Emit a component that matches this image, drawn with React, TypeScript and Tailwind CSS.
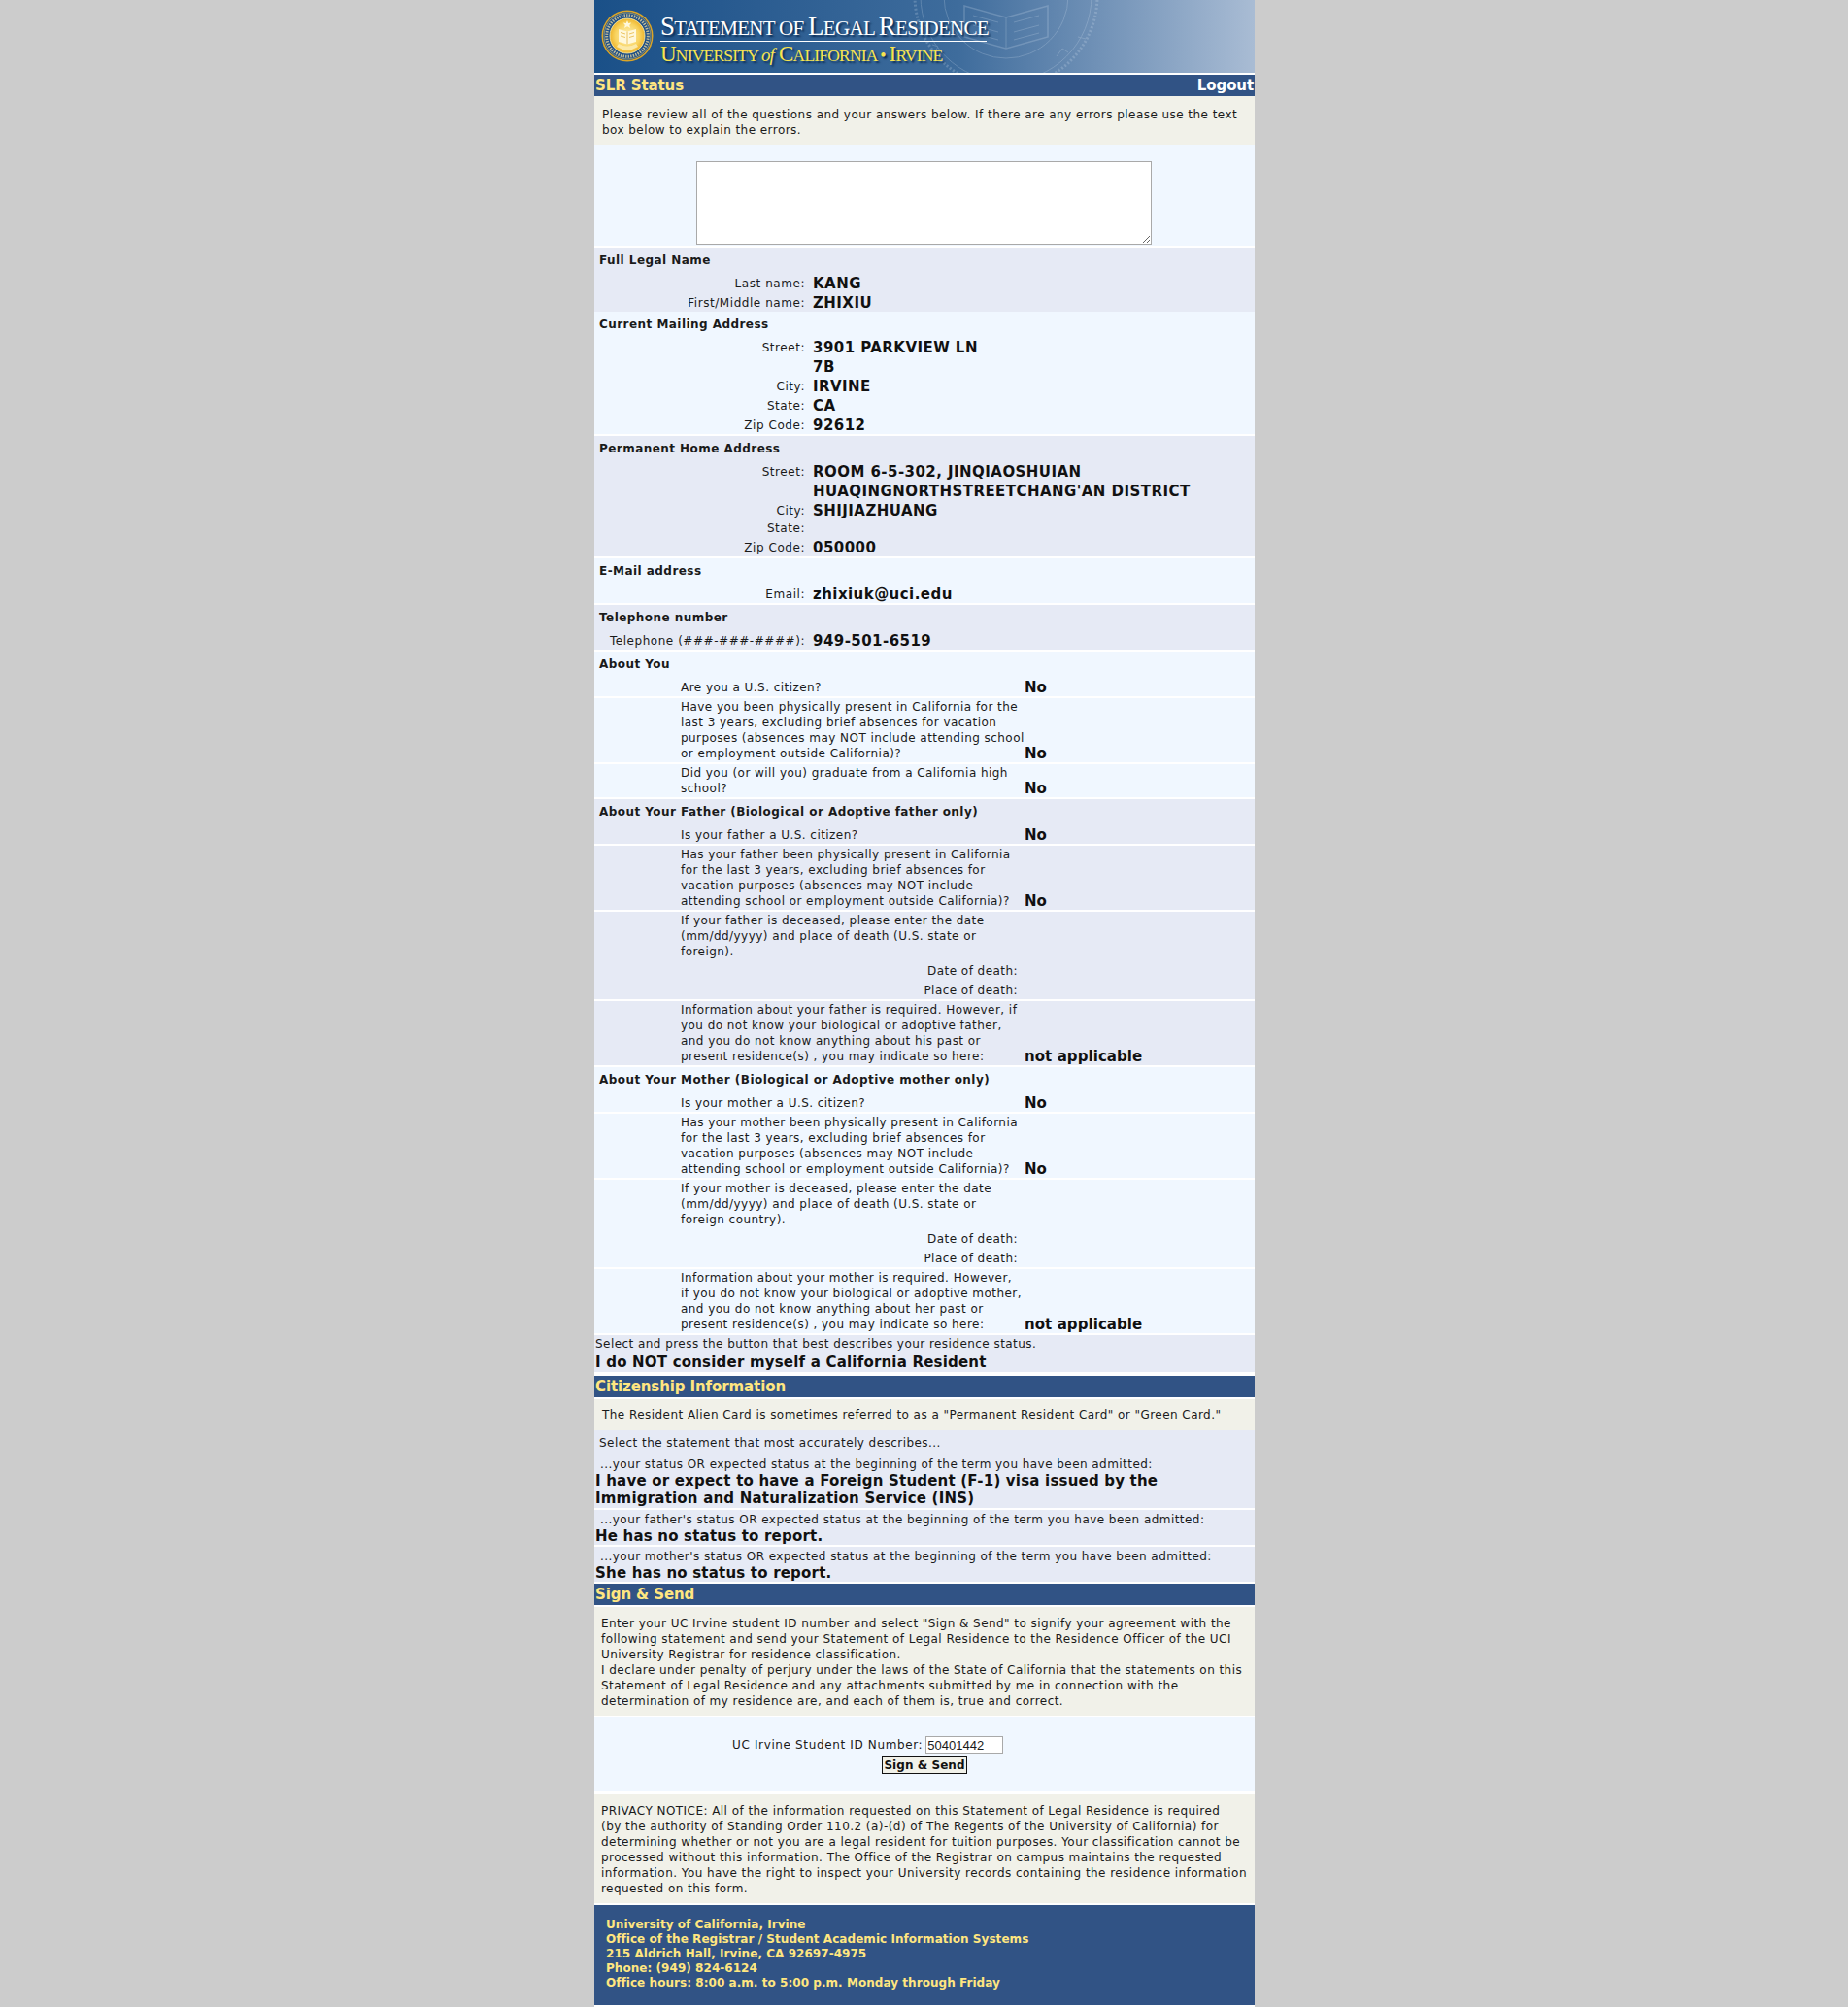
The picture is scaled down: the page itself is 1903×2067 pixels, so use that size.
import React from 'react'

const band = 'bg-[#e6eaf5]'
const light = 'bg-[#f0f7ff]'
const tan = 'bg-[#f1f1e9]'
const value = 'font-bold text-[15px] leading-[18px] tracking-[0.45px] text-[#111]'

function Cap({ big, small }: { big: string; small: string }) {
  return (
    <>
      <span className="text-[27px]">{big}</span>
      <span className="text-[21px]">{small}</span>
    </>
  )
}

function Seal() {
  return (
    <svg viewBox="0 0 54 54" className="mt-[10px] w-[54px] h-[54px] shrink-0">
      <defs>
        <radialGradient id="sealDisc">
          <stop offset="0%" stopColor="#fff3c0" />
          <stop offset="70%" stopColor="#f8d35f" />
          <stop offset="100%" stopColor="#eeb52e" />
        </radialGradient>
      </defs>
      <circle cx="27" cy="27" r="26.5" fill="#dca526" />
      <circle cx="27" cy="27" r="25" fill="#1f4f86" />
      <circle cx="27" cy="27" r="24" fill="none" stroke="#f7d774" strokeWidth="0.5" />
      <circle cx="27" cy="27" r="18" fill="url(#sealDisc)" stroke="#fff2b0" strokeWidth="0.8" />
      <circle cx="27" cy="27" r="21.3" fill="none" stroke="#f4dfa0" strokeWidth="3" strokeDasharray="1.4 1.2" opacity="0.75" />
      <path d="M18 20 L27 22.5 L36 20 L36 33 L27 35.5 L18 33 Z" fill="#fff8dc" />
      <path d="M27 22.5 V35.5 M20 23.5 L25 25 M20 27 L25 28.5 M29 25 L34 23.5 M29 28.5 L34 27" stroke="#e3ad2c" strokeWidth="0.7" fill="none" />
      <path d="M27 11 l1.2 3 3-.4-2 2.3 1 3-3.2-1.6-3.2 1.6 1-3-2-2.3 3 .4 z" fill="#fff8dc" />
      <path d="M16 38 Q27 45 38 38 L36 35 Q27 40 18 35 Z" fill="#fbe9a8" />
    </svg>
  )
}

function Watermark() {
  return (
    <svg viewBox="0 102 196 75" className="absolute left-[326px] top-0 w-[196px] h-[75px] opacity-[0.22]" fill="none" stroke="#dbe7f5">
      <circle cx="98" cy="98" r="94" strokeWidth="3" strokeDasharray="2 2" />
      <circle cx="98" cy="98" r="88" strokeWidth="1" />
      <circle cx="98" cy="98" r="64" strokeWidth="1" />
      <path d="M55 108 L98 120 L141 108 L141 140 L98 152 L55 140 Z" strokeWidth="1.5" />
      <path d="M98 120 V152 M64 118 L90 125 M64 128 L90 135 M64 136 L90 143 M106 125 L132 118 M106 135 L132 128 M106 143 L132 136" strokeWidth="1" />
      <path d="M14 128 L20 132 L14 138 M22 148 L28 150 L24 157 M150 160 L156 152 L162 156 M172 140 L180 142" strokeWidth="1" />
    </svg>
  )
}

function Header() {
  return (
    <div className="relative h-[75px] overflow-hidden flex items-start pl-[7px] tracking-normal bg-gradient-to-r from-[#1a5088] via-[#3e6c9c] via-55% to-[#a9bcd4]">
      <Watermark />
      <Seal />
      <div className="relative ml-[7px] font-['Liberation_Serif',serif]">
        <div className="h-[42px] pt-[14px] leading-[27px] tracking-[-0.7px] text-white whitespace-nowrap [text-shadow:2px_2px_2px_#0b2b52]">
          <Cap big="S" small="TATEMENT OF " /><Cap big="L" small="EGAL " /><Cap big="R" small="ESIDENCE" />
        </div>
        <div className="h-[1px] w-[336px] bg-white" />
        <div className="mt-[1px] leading-[23px] tracking-[-0.8px] text-[#f8e44f] whitespace-nowrap [text-shadow:2px_2px_2px_#0b2b52]">
          <span className="text-[23px]">U</span><span className="text-[17.5px]">NIVERSITY </span><span className="text-[19px] italic">of</span>
          <span className="text-[23px]"> C</span><span className="text-[17.5px]">ALIFORNIA </span><span className="text-[18px]">• </span>
          <span className="text-[23px]">I</span><span className="text-[17.5px]">RVINE</span>
        </div>
      </div>
    </div>
  )
}

function NavBar({ title, right, className = '' }: { title: string; right?: string; className?: string }) {
  return (
    <div className={`h-[22px] bg-[#315385] flex items-center justify-between px-[1px] font-bold text-[15px] tracking-[-0.1px] ${className}`}>
      <span className="text-[#ffe680]">{title}</span>
      {right && <a className="text-white">{right}</a>}
    </div>
  )
}

type Field = { label: string; val?: string }

function Section({ title, fields, bg, className = '' }: { title: string; fields: Field[]; bg: string; className?: string }) {
  return (
    <div className={`${bg} ${className}`}>
      <div className="h-[26px] pl-[5px] pt-[5px] font-bold leading-[16px]">{title}</div>
      {fields.map((f, i) => (
        <div key={i} className={`flex items-center ${f.val ? 'h-[20px] pt-[2px]' : 'h-[18px]'}`}>
          <div className="w-[217px] text-right tracking-[0.55px]">{f.label}</div>
          <div className={`ml-[8px] ${value}`}>{f.val}</div>
        </div>
      ))}
    </div>
  )
}

function Question({ text, answer, extra, bg, first }: { text: string; answer?: string; extra?: boolean; bg: string; first?: boolean }) {
  return (
    <div className={`${bg} ${first ? '' : 'mt-[2px]'}`}>
      <div className="flex items-end py-[1px]">
        <div className="ml-[89px] w-[354px] whitespace-pre-line">{text}</div>
        <div className="font-bold text-[15px] tracking-[0.07px] text-[#111] h-[20px] leading-[24px]">{answer}</div>
      </div>
      {extra && (
        <>
          <div className="ml-[89px] w-[347px] h-[20px] text-right leading-[20px] pt-[1px]">Date of death:</div>
          <div className="ml-[89px] w-[347px] h-[20px] text-right leading-[20px] pt-[1px]">Place of death:</div>
        </>
      )}
    </div>
  )
}

function QBlock({ title, bg, rows, className = '' }: { title: string; bg: string; rows: { text: string; answer?: string; extra?: boolean }[]; className?: string }) {
  return (
    <div className={className}>
      <div className={`${bg} h-[24px] pl-[5px] pt-[5px] font-bold leading-[16px]`}>{title}</div>
      {rows.map((r, i) => (
        <Question key={i} {...r} bg={bg} first={i === 0} />
      ))}
    </div>
  )
}

function Status({ q, a, className = '' }: { q: string; a: string; className?: string }) {
  return (
    <div className={className}>
      <div className="pl-[6px] leading-[16px]">{q}</div>
      <div className="pl-[1px] font-bold text-[15px] leading-[18px] tracking-[0.2px] text-[#111]">{a}</div>
    </div>
  )
}

export default function App() {
  return (
    <div className="min-h-screen bg-[#cccccc] font-['DejaVu_Sans','Liberation_Sans',sans-serif] text-[12px] leading-[16px] tracking-[0.45px] text-[#1a1a1a]">
      <div className="w-[680px] ml-[612px] bg-white pb-[2px]">
        <Header />
        <NavBar title="SLR Status" right="Logout" className="mt-[2px]" />
        <div className={`${tan} h-[50px] px-[8px] pt-[11px]`}>
          Please review all of the questions and your answers below. If there are any errors please use the text box below to explain the errors.
        </div>
        <div className={`${light} h-[104px] flex justify-center pt-[17px]`}>
          <textarea className="w-[469px] h-[86px] bg-white border border-[#a9a9a9] ml-[-1px]" />
        </div>
        <Section
          className="mt-[2px]"
          bg={band}
          title="Full Legal Name"
          fields={[
            { label: 'Last name:', val: 'KANG' },
            { label: 'First/Middle name:', val: 'ZHIXIU' },
          ]}
        />
        <Section
          bg={light}
          title="Current Mailing Address"
          fields={[
            { label: 'Street:', val: '3901 PARKVIEW LN' },
            { label: '', val: '7B' },
            { label: 'City:', val: 'IRVINE' },
            { label: 'State:', val: 'CA' },
            { label: 'Zip Code:', val: '92612' },
          ]}
        />
        <Section
          className="mt-[2px]"
          bg={band}
          title="Permanent Home Address"
          fields={[
            { label: 'Street:', val: 'ROOM 6-5-302, JINQIAOSHUIAN' },
            { label: '', val: "HUAQINGNORTHSTREETCHANG'AN DISTRICT" },
            { label: 'City:', val: 'SHIJIAZHUANG' },
            { label: 'State:' },
            { label: 'Zip Code:', val: '050000' },
          ]}
        />
        <Section className="mt-[2px]" bg={light} title="E-Mail address" fields={[{ label: 'Email:', val: 'zhixiuk@uci.edu' }]} />
        <Section className="mt-[2px]" bg={band} title="Telephone number" fields={[{ label: 'Telephone (###-###-####):', val: '949-501-6519' }]} />

        <QBlock
          className="mt-[2px]"
          bg={light}
          title="About You"
          rows={[
            { text: 'Are you a U.S. citizen?', answer: 'No' },
            { text: 'Have you been physically present in California for the last 3 years, excluding brief absences for vacation purposes (absences may NOT include attending school or employment outside California)?', answer: 'No' },
            { text: 'Did you (or will you) graduate from a California high school?', answer: 'No' },
          ]}
        />
        <QBlock
          className="mt-[2px]"
          bg={band}
          title="About Your Father (Biological or Adoptive father only)"
          rows={[
            { text: 'Is your father a U.S. citizen?', answer: 'No' },
            { text: 'Has your father been physically present in California for the last 3 years, excluding brief absences for vacation purposes (absences may NOT include attending school or employment outside California)?', answer: 'No' },
            { text: 'If your father is deceased, please enter the date (mm/dd/yyyy) and place of death (U.S. state or foreign).', extra: true },
            { text: 'Information about your father is required. However, if you do not know your biological or adoptive father, and you do not know anything about his past or present residence(s) , you may indicate so here:', answer: 'not applicable' },
          ]}
        />
        <QBlock
          className="mt-[2px]"
          bg={light}
          title="About Your Mother (Biological or Adoptive mother only)"
          rows={[
            { text: 'Is your mother a U.S. citizen?', answer: 'No' },
            { text: 'Has your mother been physically present in California for the last 3 years, excluding brief absences for vacation purposes (absences may NOT include attending school or employment outside California)?', answer: 'No' },
            { text: 'If your mother is deceased, please enter the date (mm/dd/yyyy) and place of death (U.S. state or\nforeign country).', extra: true },
            { text: 'Information about your mother is required. However,\nif you do not know your biological or adoptive mother, and you do not know anything about her past or present residence(s) , you may indicate so here:', answer: 'not applicable' },
          ]}
        />

        <div className={`${band} mt-[2px] h-[38px] pl-[1px]`}>
          <div className="leading-[16px] pt-[1px]">Select and press the button that best describes your residence status.</div>
          <div className="font-bold text-[15px] leading-[22px] tracking-[0.2px] text-[#111]">I do NOT consider myself a California Resident</div>
        </div>

        <NavBar title="Citizenship Information" className="mt-[4px]" />
        <div className={`${tan} mt-[2px] h-[32px] pl-[8px] pt-[8px]`}>
          The Resident Alien Card is sometimes referred to as a "Permanent Resident Card" or "Green Card."
        </div>
        <div className={band}>
          <div className="pl-[5px] pt-[5px] h-[24px]">Select the statement that most accurately describes...</div>
          <Status
            className="h-[56px] pt-[3px]"
            q="...your status OR expected status at the beginning of the term you have been admitted:"
            a="I have or expect to have a Foreign Student (F-1) visa issued by the Immigration and Naturalization Service (INS)"
          />
        </div>
        <Status className={`${band} mt-[2px] h-[36px] pt-[2px]`} q="...your father's status OR expected status at the beginning of the term you have been admitted:" a="He has no status to report." />
        <Status className={`${band} mt-[2px] h-[36px] pt-[2px]`} q="...your mother's status OR expected status at the beginning of the term you have been admitted:" a="She has no status to report." />

        <NavBar title="Sign & Send" className="mt-[2px]" />
        <div className={`${tan} mt-[2px] px-[7px] pt-[9px] h-[112px]`}>
          Enter your UC Irvine student ID number and select "Sign &amp; Send" to signify your agreement with the following statement and send your Statement of Legal Residence to the Residence Officer of the UCI University Registrar for residence classification.
          <br />
          I declare under penalty of perjury under the laws of the State of California that the statements on this Statement of Legal Residence and any attachments submitted by me in connection with the determination of my residence are, and each of them is, true and correct.
        </div>
        <div className={`${light} mt-[1px] h-[77px] pt-[20px]`}>
          <div className="flex items-center pl-[142px] h-[18px]">
            <label className="tracking-[0.64px]">UC Irvine Student ID Number:</label>
            <input defaultValue="50401442" className="ml-[3px] w-[80px] h-[18px] bg-white border border-[#a9a9a9] px-[1px] font-['Liberation_Sans',sans-serif] tracking-normal text-[13px]" />
          </div>
          <div className="flex justify-center mt-[3px]">
            <button className="w-[88px] h-[18px] border border-[#111] bg-[#f1f1e9] font-bold text-[#111] leading-[14px] tracking-[0.05px]">Sign &amp; Send</button>
          </div>
        </div>
        <div className={`${tan} mt-[3px] h-[112px] px-[7px] pt-[9px]`}>
          PRIVACY NOTICE: All of the information requested on this Statement of Legal Residence is required
          <br />
          (by the authority of Standing Order 110.2 (a)-(d) of The Regents of the University of California) for determining whether or not you are a legal resident for tuition purposes. Your classification cannot be processed without this information. The Office of the Registrar on campus maintains the requested information. You have the right to inspect your University records containing the residence information requested on this form.
        </div>
        <div className="mt-[2px] h-[103px] bg-[#315385] pl-[12px] pt-[13px] font-bold leading-[15px] tracking-[0.05px] text-[#ffe680]">
          <div>University of California, Irvine</div>
          <div>Office of the Registrar / Student Academic Information Systems</div>
          <div>215 Aldrich Hall, Irvine, CA 92697-4975</div>
          <div>Phone: (949) 824-6124</div>
          <div>Office hours: 8:00 a.m. to 5:00 p.m. Monday through Friday</div>
        </div>
      </div>
    </div>
  )
}
